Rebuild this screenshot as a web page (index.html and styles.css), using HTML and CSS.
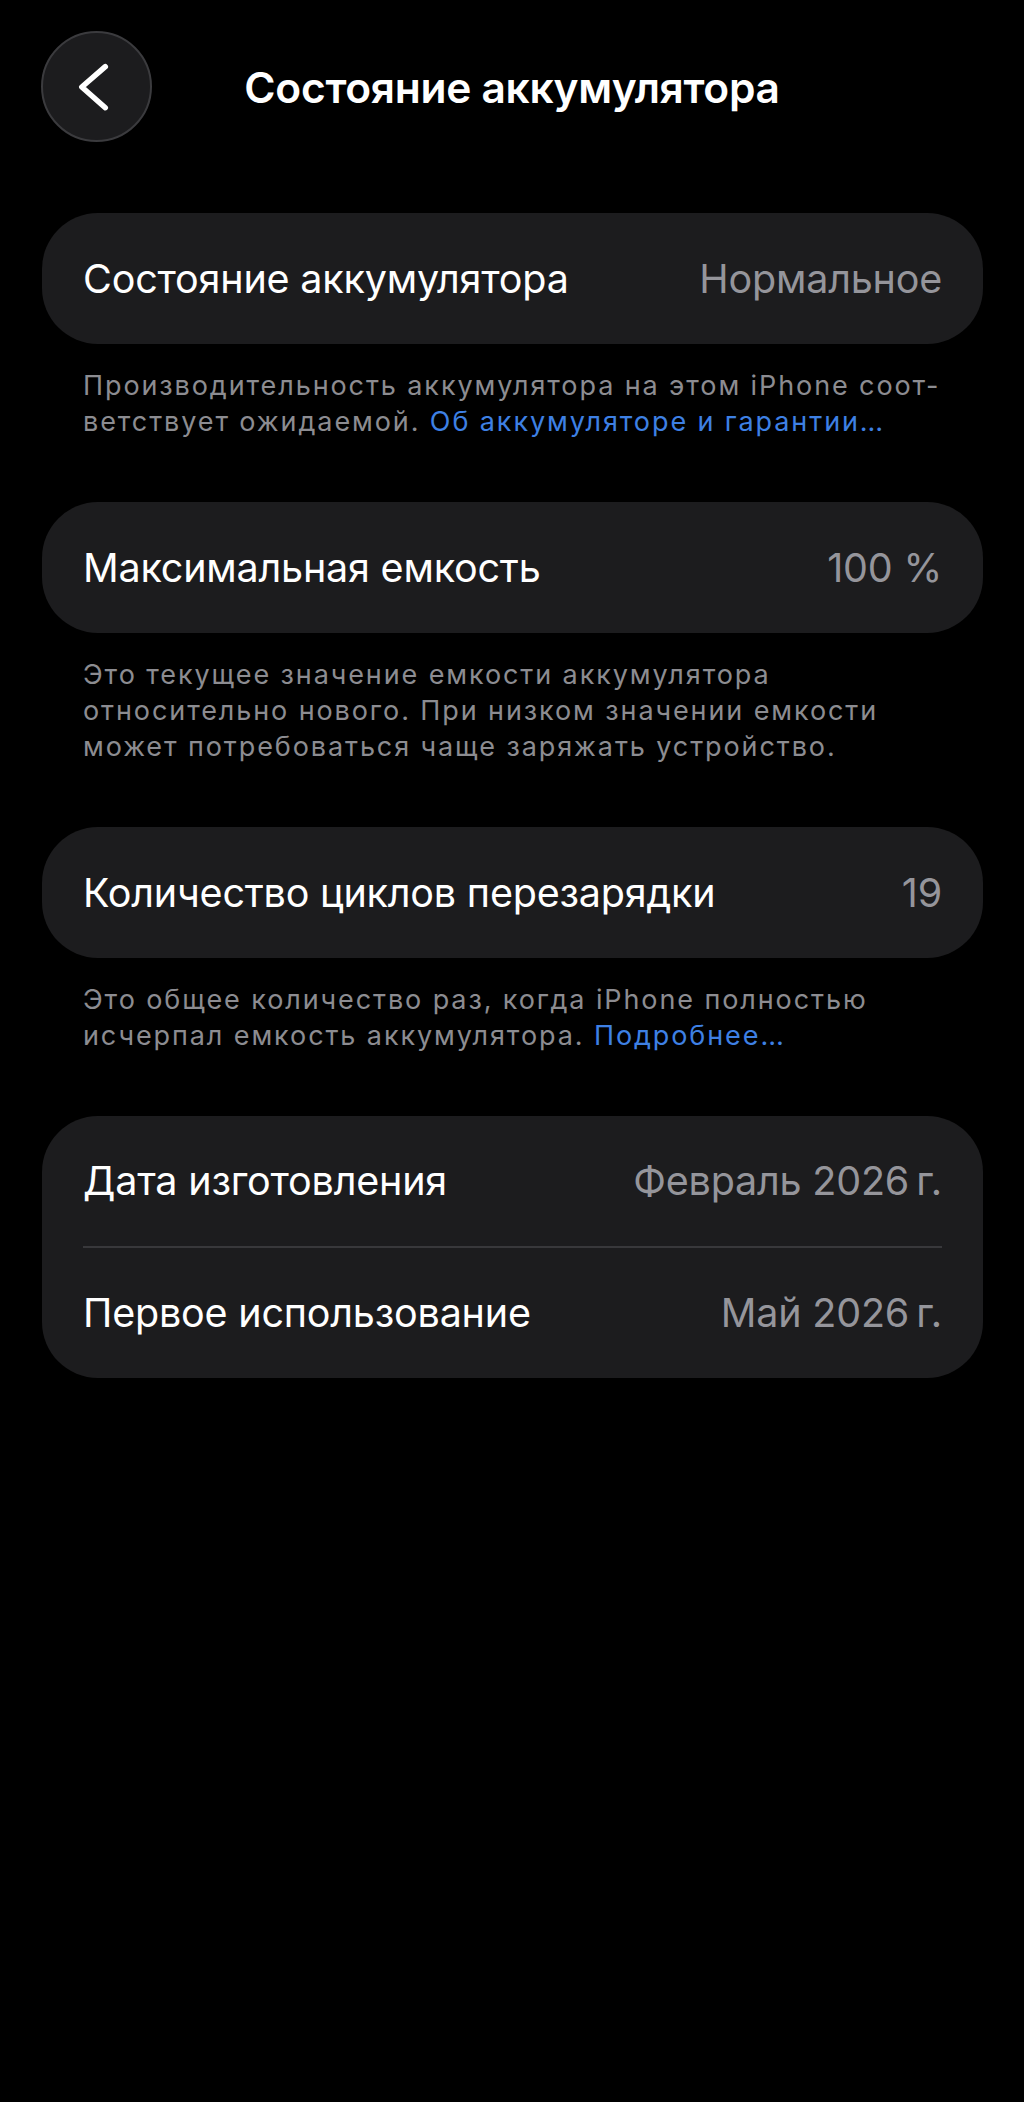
FILE: index.html
```html
<!DOCTYPE html>
<html lang="ru">
<head>
<meta charset="utf-8">
<title>Состояние аккумулятора</title>
<link rel="stylesheet" href="styles.css">
</head>
<body>
<header class="nav">
  <button class="back" aria-label="Назад">
    <svg class="back-icon" viewBox="0 0 111 111" width="111" height="111">
      <circle cx="55.5" cy="55.5" r="54.5" fill="#1c1c1e" stroke="#3b3b3e" stroke-width="2"/>
      <path d="M64.3 35.7 L40.8 56 L64.3 76.7" fill="none" stroke="#ffffff" stroke-width="5.5" stroke-linecap="round" stroke-linejoin="round"/>
    </svg>
  </button>
  <h1 class="title">Состояние аккумулятора</h1>
  <span class="nav-spacer"></span>
</header>
<main class="content">
  <section class="group">
    <div class="card">
      <div class="row"><span class="label">Состояние аккумулятора</span><span class="value">Нормальное</span></div>
    </div>
    <p class="note"><span class="line">Производительность аккумулятора на этом iPhone соот-</span><span class="line">ветствует ожидаемой. <a class="link" href="#">Об аккумуляторе и гарантии…</a></span></p>
  </section>
  <section class="group">
    <div class="card">
      <div class="row"><span class="label">Максимальная емкость</span><span class="value">100 %</span></div>
    </div>
    <p class="note"><span class="line">Это текущее значение емкости аккумулятора</span><span class="line">относительно нового. При низком значении емкости</span><span class="line">может потребоваться чаще заряжать устройство.</span></p>
  </section>
  <section class="group">
    <div class="card">
      <div class="row"><span class="label">Количество циклов перезарядки</span><span class="value">19</span></div>
    </div>
    <p class="note"><span class="line">Это общее количество раз, когда iPhone полностью</span><span class="line">исчерпал емкость аккумулятора. <a class="link" href="#">Подробнее…</a></span></p>
  </section>
  <section class="group">
    <div class="card card-list">
      <div class="row"><span class="label">Дата изготовления</span><span class="value">Февраль 2026&#8239;г.</span></div>
      <div class="separator"></div>
      <div class="row"><span class="label">Первое использование</span><span class="value">Май 2026&#8239;г.</span></div>
    </div>
  </section>
</main>
</body>
</html>
```

FILE: styles.css
```css
* { box-sizing: border-box; }

html, body {
  margin: 0;
  padding: 0;
  background: #000000;
}

body {
  font-family: "Inter", "Roboto", "Liberation Sans", sans-serif;
  color: #ffffff;
  min-height: 2102px;
  -webkit-font-smoothing: antialiased;
}

.nav {
  display: grid;
  grid-template-columns: 111px 1fr 111px;
  align-items: center;
  padding: 31px 41px 0 41px;
}

.back {
  width: 111px;
  height: 111px;
  padding: 0;
  margin: 0;
  border: 0;
  background: transparent;
  display: block;
}

.back-icon {
  display: block;
}

.title {
  margin: 0;
  text-align: center;
  font-size: 42.5px;
  font-weight: 600;
  letter-spacing: -0.3px;
  line-height: 1.2;
  padding-top: 2px;
}

.content {
  padding: 71px 41px 0 42px;
  display: flex;
  flex-direction: column;
  gap: 62px;
}

.card {
  background: #1c1c1e;
  border-radius: 56px;
  padding: 0 41px;
}

.row {
  height: 131px;
  display: flex;
  align-items: center;
  justify-content: space-between;
  font-size: 39.5px;
  letter-spacing: -0.2px;
}

.label {
  color: #ffffff;
}

.value {
  color: #95959b;
}

.separator {
  height: 2px;
  background: #38383b;
}

.card-list .row {
  height: 130px;
}

.note {
  margin: 24px 0 0 0;
  padding: 0 41px;
  font-size: 27px;
  line-height: 36px;
  letter-spacing: 1.9px;
  color: #8c8c91;
}

.line {
  display: block;
  white-space: nowrap;
}

.link {
  color: #3e80e4;
  text-decoration: none;
}
```
